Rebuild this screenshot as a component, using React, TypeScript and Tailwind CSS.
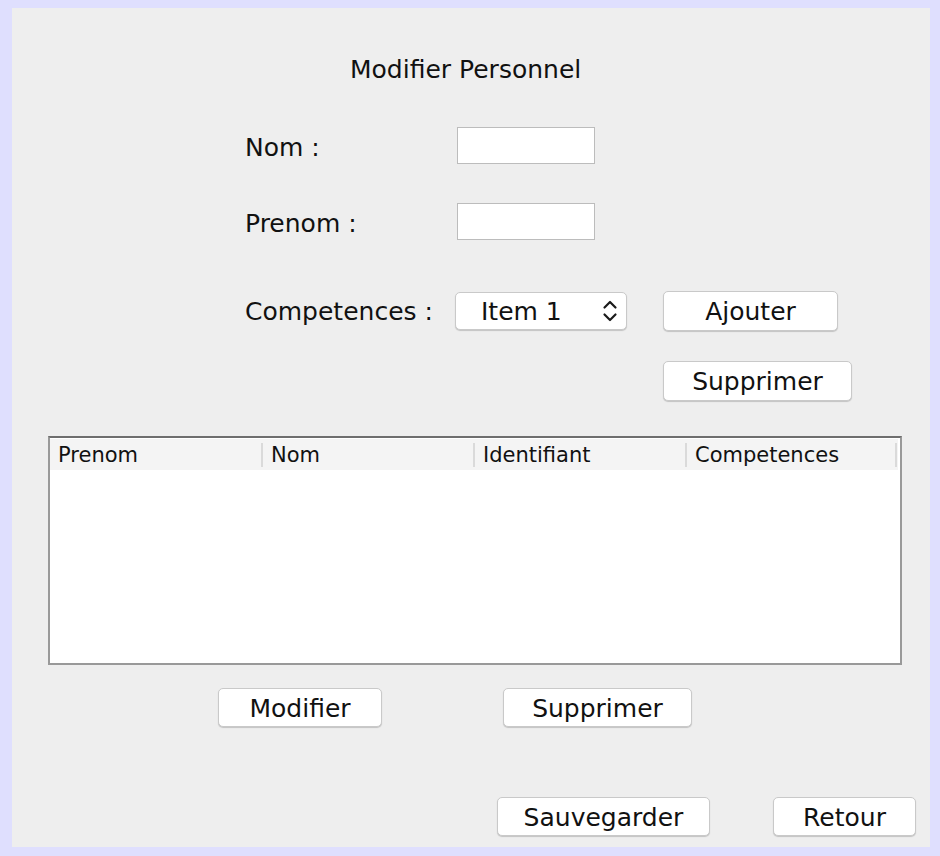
import { ReactNode } from "react";

const font = { fontFamily: '"DejaVu Sans", "Liberation Sans", sans-serif' };

function AquaButton({ label, w }: { label: string; w: string }) {
  return (
    <button
      className={`${w} h-[39px] rounded-[5px] bg-white border border-[#c9c9c9] shadow-[0_1px_1px_rgba(0,0,0,0.18)] text-[25px] text-[#111] flex items-center justify-center pt-[2px]`}
    >
      {label}
    </button>
  );
}

function Field() {
  return <div className="ml-[445px] w-[138px] h-[37px] bg-white border border-[#bcbcbc]" />;
}

function Label({ children }: { children: ReactNode }) {
  return <span className="absolute left-[233px] top-[8px] text-[25px] text-[#111] leading-none">{children}</span>;
}

function Chevrons() {
  return (
    <svg className="shrink-0" width="16" height="24" viewBox="0 0 16 24" fill="none" stroke="#1a1a1a" strokeWidth="2.2" strokeLinecap="round" strokeLinejoin="round">
      <path d="M2.5 8.5 L8 3 L13.5 8.5" />
      <path d="M2.5 15.5 L8 21 L13.5 15.5" />
    </svg>
  );
}

const columns = ["Prenom", "Nom", "Identifiant", "Competences"];

export default function App() {
  return (
    <div className="w-[940px] h-[856px] bg-[#dfdffe] pt-[8px] pl-[12px] pr-[10px] pb-[9px]" style={font}>
      <div className="h-full bg-[#eeeeee] flex flex-col">
        <div className="mt-[47px] h-[30px] pl-[338px] flex items-center text-[25px] text-[#111]">
          Modifier Personnel
        </div>

        <div className="relative mt-[42px] h-[37px] flex items-center">
          <Label>Nom :</Label>
          <Field />
        </div>

        <div className="relative mt-[39px] h-[37px] flex items-center">
          <Label>Prenom :</Label>
          <Field />
        </div>

        <div className="relative mt-[51px] h-[40px] flex items-center">
          <span className="absolute left-[233px] top-[8px] text-[25px] text-[#111] leading-none">Competences :</span>
          <div className="ml-[443px] w-[172px] h-[38px] rounded-[5px] bg-white border border-[#c9c9c9] shadow-[0_1px_1px_rgba(0,0,0,0.18)] flex items-center pl-[25px] pr-[8px] text-[25px] text-[#111]">
            <span className="flex-1 pt-[2px]">Item 1</span>
            <Chevrons />
          </div>
          <div className="ml-[36px]">
            <AquaButton label="Ajouter" w="w-[175px] h-[40px]" />
          </div>
        </div>

        <div className="mt-[30px] h-[40px] pl-[651px] flex items-center">
          <AquaButton label="Supprimer" w="w-[189px] h-[40px]" />
        </div>

        <div className="mt-[35px] ml-[36px] w-[854px] h-[229px] border-2 border-[#999999] border-t-[#6e6e6e] bg-white pt-[1px] flex flex-col">
          <div className="h-[31px] bg-[#f4f4f4] mr-[2px] flex text-[21px] text-[#111]">
            {columns.map((c, i) => (
              <div key={c} className={`${i === 3 ? "w-[210px]" : i === 0 ? "w-[213px]" : "w-[212px]"} flex items-center`}>
                <span className="flex-1 pl-[8px] pt-[2px] leading-none">{c}</span>
                <span className="w-[2px] h-[24px] bg-[#dadada]" />
              </div>
            ))}
          </div>
        </div>

        <div className="mt-[23px] h-[39px] flex items-center">
          <div className="ml-[206px]">
            <AquaButton label="Modifier" w="w-[164px]" />
          </div>
          <div className="ml-[121px]">
            <AquaButton label="Supprimer" w="w-[189px]" />
          </div>
        </div>

        <div className="mt-[70px] h-[39px] flex items-center">
          <div className="ml-[485px]">
            <AquaButton label="Sauvegarder" w="w-[213px]" />
          </div>
          <div className="ml-[63px]">
            <AquaButton label="Retour" w="w-[143px]" />
          </div>
        </div>
      </div>
    </div>
  );
}
